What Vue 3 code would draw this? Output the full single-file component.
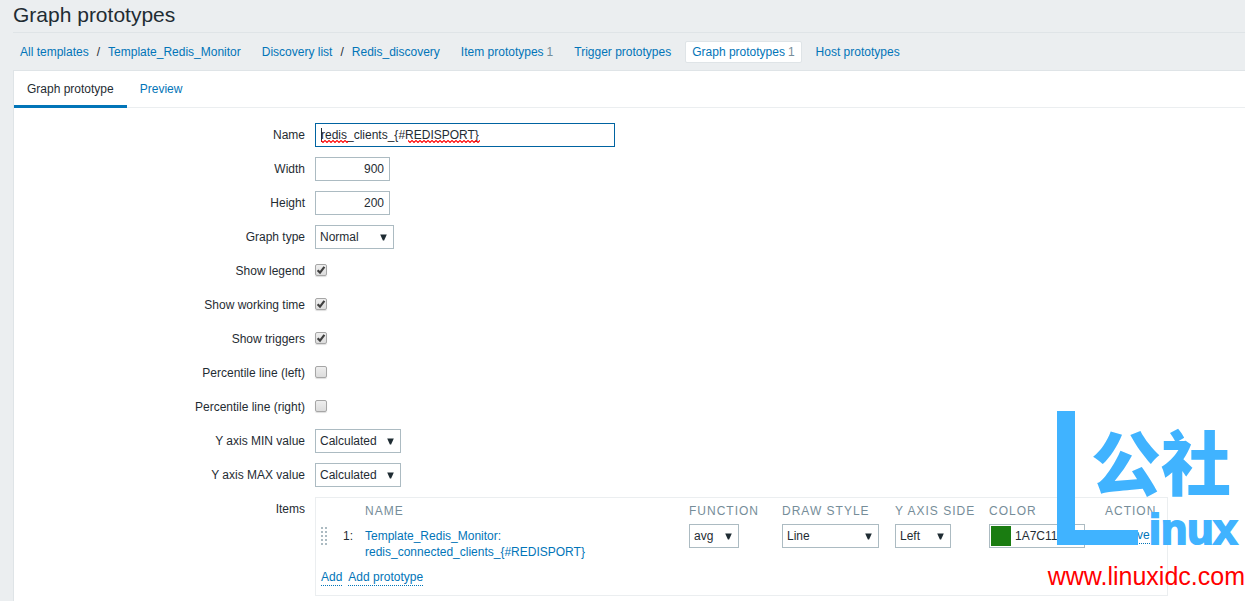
<template>
  <div class="page">
    <header class="header">
      <h1 class="header__title">Graph prototypes</h1>
      <nav class="crumbs">
        <div class="crumbs__item">
          <a href="#">All templates</a>
          <span class="crumbs__slash">/</span>
          <a href="#">Template_Redis_Monitor</a>
        </div>
        <div class="crumbs__item">
          <a href="#">Discovery list</a>
          <span class="crumbs__slash">/</span>
          <a href="#">Redis_discovery</a>
        </div>
        <div
          v-for="link in links"
          :key="link.title"
          class="crumbs__item"
          :class="{ 'crumbs__item--selected': link.selected }"
        >
          <a href="#">{{ link.title }}</a>
          <span v-if="link.count" class="crumbs__count">{{ link.count }}</span>
        </div>
      </nav>
    </header>

    <main class="panel">
      <div class="tabs">
        <a
          v-for="tab in tabs"
          :key="tab"
          href="#"
          class="tabs__item"
          :class="{ 'tabs__item--active': tab === activeTab }"
          @click.prevent="activeTab = tab"
        >{{ tab }}</a>
      </div>

      <form class="form" @submit.prevent>
        <label class="form__label" for="name">Name</label>
        <div class="form__field">
          <div class="name_box">
            <input id="name" v-model="graph.name" class="input input--name" type="text" spellcheck="false">
            <i class="caret"></i>
            <i class="wave wave--first"></i>
            <i class="wave wave--second"></i>
          </div>
        </div>

        <label class="form__label" for="width">Width</label>
        <div class="form__field">
          <input id="width" v-model="graph.width" class="input input--number" type="text">
        </div>

        <label class="form__label" for="height">Height</label>
        <div class="form__field">
          <input id="height" v-model="graph.height" class="input input--number" type="text">
        </div>

        <label class="form__label" for="type">Graph type</label>
        <div class="form__field">
          <select id="type" v-model="graph.type" class="select select--type">
            <option>Normal</option>
            <option>Stacked</option>
            <option>Pie</option>
            <option>Exploded</option>
          </select>
        </div>

        <template v-for="box in checkboxes" :key="box.id">
          <label class="form__label" :for="box.id">{{ box.title }}</label>
          <div class="form__field">
            <input :id="box.id" v-model="box.checked" class="checkbox" type="checkbox">
          </div>
        </template>

        <template v-for="axis in axes" :key="axis.id">
          <label class="form__label" :for="axis.id">{{ axis.title }}</label>
          <div class="form__field">
            <select :id="axis.id" v-model="axis.value" class="select select--axis">
              <option>Calculated</option>
              <option>Fixed</option>
              <option>Item</option>
            </select>
          </div>
        </template>

        <span class="form__label">Items</span>
        <div class="items">
          <table class="items__table">
            <colgroup>
              <col class="col_drag">
              <col class="col_drag">
              <col class="col_name">
              <col class="col_function">
              <col class="col_style">
              <col class="col_side">
              <col class="col_color">
              <col class="col_action">
            </colgroup>
            <thead>
              <tr>
                <th></th>
                <th></th>
                <th>Name</th>
                <th>Function</th>
                <th>Draw style</th>
                <th>Y axis side</th>
                <th>Color</th>
                <th>Action</th>
              </tr>
            </thead>
            <tbody>
              <tr>
                <td><span class="drag"></span></td>
                <td class="items__text">1:</td>
                <td class="items__text">
                  <a href="#">Template_Redis_Monitor:<br>redis_connected_clients_{#REDISPORT}</a>
                </td>
                <td>
                  <select v-model="item.func" class="select select--function" aria-label="Function">
                    <option>all</option>
                    <option>min</option>
                    <option>avg</option>
                    <option>max</option>
                  </select>
                </td>
                <td>
                  <select v-model="item.style" class="select select--style" aria-label="Draw style">
                    <option>Line</option>
                    <option>Filled region</option>
                    <option>Bold line</option>
                    <option>Dot</option>
                  </select>
                </td>
                <td>
                  <select v-model="item.side" class="select select--side" aria-label="Y axis side">
                    <option>Left</option>
                    <option>Right</option>
                  </select>
                </td>
                <td>
                  <div class="color">
                    <button type="button" class="color__swatch" aria-label="Pick color"></button>
                    <input v-model="item.color" class="color__input" type="text" aria-label="Color">
                  </div>
                </td>
                <td class="items__text"><button type="button" class="link_btn">Remove</button></td>
              </tr>
            </tbody>
          </table>
          <div class="items__footer">
            <button type="button" class="link_btn">Add</button>
            <button type="button" class="link_btn">Add prototype</button>
          </div>
        </div>
      </form>
    </main>

    <div class="mark">
      <div class="mark__bar"></div>
      <span class="mark__cjk">公社</span>
      <span class="mark__word">inux</span>
      <span class="mark__url">www.linuxidc.com</span>
    </div>
  </div>
</template>

<script setup>
  import { ref, reactive } from 'vue';

  const links = [
    { title: 'Item prototypes', count: 1 },
    { title: 'Trigger prototypes' },
    { title: 'Graph prototypes', count: 1, selected: true },
    { title: 'Host prototypes' }
  ];

  const tabs = ['Graph prototype', 'Preview'];
  const activeTab = ref('Graph prototype');

  const graph = reactive({
    name: 'redis_clients_{#REDISPORT}',
    width: '900',
    height: '200',
    type: 'Normal'
  });

  const checkboxes = reactive([
    { id: 'legend', title: 'Show legend', checked: true },
    { id: 'work_period', title: 'Show working time', checked: true },
    { id: 'triggers', title: 'Show triggers', checked: true },
    { id: 'percent_left', title: 'Percentile line (left)', checked: false },
    { id: 'percent_right', title: 'Percentile line (right)', checked: false }
  ]);

  const axes = reactive([
    { id: 'ymin', title: 'Y axis MIN value', value: 'Calculated' },
    { id: 'ymax', title: 'Y axis MAX value', value: 'Calculated' }
  ]);

  const item = reactive({
    func: 'avg',
    style: 'Line',
    side: 'Left',
    color: '1A7C11'
  });
</script>

<style>
  body {
    background: #ebeef0;
  }
</style>

<style scoped>
  .page {
    position: relative;
    display: flex;
    flex-direction: column;
    min-height: 100vh;
    padding-left: 13px;
    box-sizing: border-box;
    overflow: hidden;
    font: 12px/16px "Liberation Sans", Arial, sans-serif;
    color: #1f2c33;
  }

  a {
    color: #0275b8;
    text-decoration: none;
  }

  input, select, button {
    margin: 0;
    box-sizing: border-box;
    font: inherit;
    color: inherit;
    border-radius: 0;
    outline: none;
  }

  .header__title {
    margin: 0;
    height: 33px;
    box-sizing: border-box;
    padding-top: 3px;
    border-bottom: 1px solid #dfe4e7;
    font-size: 21px;
    line-height: 24px;
    font-weight: normal;
  }

  .crumbs {
    display: flex;
    align-items: center;
    gap: 7px;
    height: 37px;
  }

  .crumbs__item {
    display: flex;
    padding: 2px 6px;
    border: 1px solid transparent;
    border-radius: 2px;
    white-space: nowrap;
  }

  .crumbs__item--selected {
    background: #fff;
    border-color: #dfe4e7;
  }

  .crumbs__slash {
    padding: 0 8px;
  }

  .crumbs__count {
    padding-left: 3px;
    color: #768d99;
  }

  .panel {
    flex: 1;
    padding-bottom: 4px;
    background: #fff;
    border: 1px solid #dfe4e7;
    border-width: 1px 0 0 1px;
  }

  .tabs {
    display: flex;
    height: 37px;
    box-sizing: border-box;
    border-bottom: 1px solid #ebeef0;
  }

  .tabs__item {
    height: 37px;
    box-sizing: border-box;
    padding: 10px 13px 0;
  }

  .tabs__item--active {
    color: #1f2c33;
    border-bottom: 3px solid #0275b8;
  }

  .form {
    display: grid;
    grid-template-columns: 291px 1fr;
    column-gap: 10px;
    row-gap: 10px;
    padding-top: 15px;
  }

  .form__label {
    line-height: 24px;
    text-align: right;
  }

  .form__field {
    display: flex;
    align-items: center;
    height: 24px;
  }

  .input {
    height: 24px;
    padding: 0 5px;
    border: 1px solid #acbbc2;
    background: #fff;
  }

  .input--name {
    display: block;
    width: 300px;
    border-color: #0063a1;
  }

  .input--number {
    width: 75px;
    text-align: right;
  }

  .name_box {
    position: relative;
  }

  .caret {
    position: absolute;
    top: 5px;
    left: 6px;
    width: 1px;
    height: 14px;
    background: #1f2c33;
  }

  .wave {
    position: absolute;
    top: 17px;
    height: 3px;
    background: url("data:image/svg+xml,%3Csvg xmlns='http://www.w3.org/2000/svg' width='4' height='3'%3E%3Cpath d='M-1 -.5L2 2.5L5 -.5' fill='none' stroke='%23f00' stroke-width='1.1'/%3E%3C/svg%3E") repeat-x;
  }

  .wave--first {
    left: 6px;
    width: 27px;
  }

  .wave--second {
    left: 93px;
    width: 72px;
  }

  .select {
    display: block;
    height: 24px;
    padding: 0 4px;
    border: 1px solid #acbbc2;
    appearance: none;
    background: #fff url("data:image/svg+xml,%3Csvg xmlns='http://www.w3.org/2000/svg' width='7' height='7'%3E%3Cpath d='M.2 .5H6.8L4.1 6.5H2.9Z' fill='%231f2c33'/%3E%3C/svg%3E") no-repeat right 6px center;
  }

  .select--type {
    width: 79px;
  }

  .select--axis {
    width: 86px;
  }

  .select--function {
    width: 50px;
  }

  .select--style {
    width: 97px;
  }

  .select--side {
    width: 56px;
  }

  .checkbox {
    width: 12px;
    height: 12px;
    margin-bottom: 2px;
    border: 1px solid #a6a6a6;
    border-radius: 2px;
    appearance: none;
    background: linear-gradient(#eee, #dcdcdc);
    box-shadow: 0 1px 1px #ddd;
  }

  .checkbox:checked {
    background: url("data:image/svg+xml,%3Csvg xmlns='http://www.w3.org/2000/svg' width='10' height='10'%3E%3Cpath d='M1.6 5.2L4 7.6L8.4 1.8' fill='none' stroke='%23404040' stroke-width='2.2'/%3E%3C/svg%3E") center no-repeat, linear-gradient(#eee, #dcdcdc);
  }

  .items {
    justify-self: start;
    border: 1px solid #ebeef0;
  }

  .items__table {
    width: 851px;
    table-layout: fixed;
    border-collapse: collapse;
  }

  .items__table th {
    height: 26px;
    padding: 0 0 0 5px;
    box-sizing: border-box;
    font-weight: normal;
    text-align: left;
    text-transform: uppercase;
    letter-spacing: 1px;
    white-space: nowrap;
    color: #768d99;
  }

  .items__table td {
    padding: 0 0 4px 5px;
    vertical-align: top;
  }

  .items__table .items__text {
    padding-top: 4px;
  }

  .col_drag {
    width: 22px;
  }

  .col_name {
    width: 324px;
  }

  .col_function {
    width: 93px;
  }

  .col_style {
    width: 113px;
  }

  .col_side {
    width: 94px;
  }

  .col_color {
    width: 116px;
  }

  .col_action {
    width: 67px;
  }

  .drag {
    display: block;
    width: 6px;
    height: 18px;
    margin-top: 3px;
    background: url("data:image/svg+xml,%3Csvg xmlns='http://www.w3.org/2000/svg' width='4' height='4'%3E%3Cpath d='M0 0H2V2H0Z' fill='%23acbbc2'/%3E%3C/svg%3E");
  }

  .color {
    display: flex;
    align-items: center;
    width: 96px;
    height: 24px;
    box-sizing: border-box;
    padding-left: 1px;
    border: 1px solid #acbbc2;
  }

  .color__swatch {
    flex: none;
    width: 20px;
    height: 20px;
    padding: 0;
    border: 0;
    background: #1a7c11;
  }

  .color__input {
    min-width: 0;
    flex: 1;
    padding: 0 4px;
    border: 0;
    background: transparent;
  }

  .items__footer {
    display: flex;
    gap: 6px;
    padding: 6px 5px 9px;
  }

  .link_btn {
    display: block;
    padding: 0;
    border: 0;
    border-bottom: 1px dotted #0275b8;
    background: transparent;
    color: #0275b8;
    line-height: 15px;
    cursor: pointer;
  }

  /* site logo lying over the lower right corner */
  .mark {
    position: absolute;
    right: 0;
    bottom: 0;
    width: 200px;
    height: 190px;
    color: #40b3ff;
    pointer-events: none;
    white-space: nowrap;
  }

  .mark__bar {
    position: absolute;
    top: 0;
    left: 12px;
    width: 81px;
    height: 134px;
    box-sizing: border-box;
    border: solid #40b3ff;
    border-width: 0 0 15px 18px;
  }

  .mark__cjk {
    position: absolute;
    top: 11px;
    left: 46px;
    font: 900 70px/76px "Noto Sans CJK SC", sans-serif;
  }

  .mark__word {
    position: absolute;
    top: 94px;
    left: 104px;
    font-size: 43px;
    line-height: 48px;
    font-weight: bold;
    -webkit-text-stroke: 2px #40b3ff;
  }

  .mark__url {
    position: absolute;
    top: 148px;
    right: 0;
    font-size: 25px;
    line-height: 34px;
    color: #f00;
  }
</style>
